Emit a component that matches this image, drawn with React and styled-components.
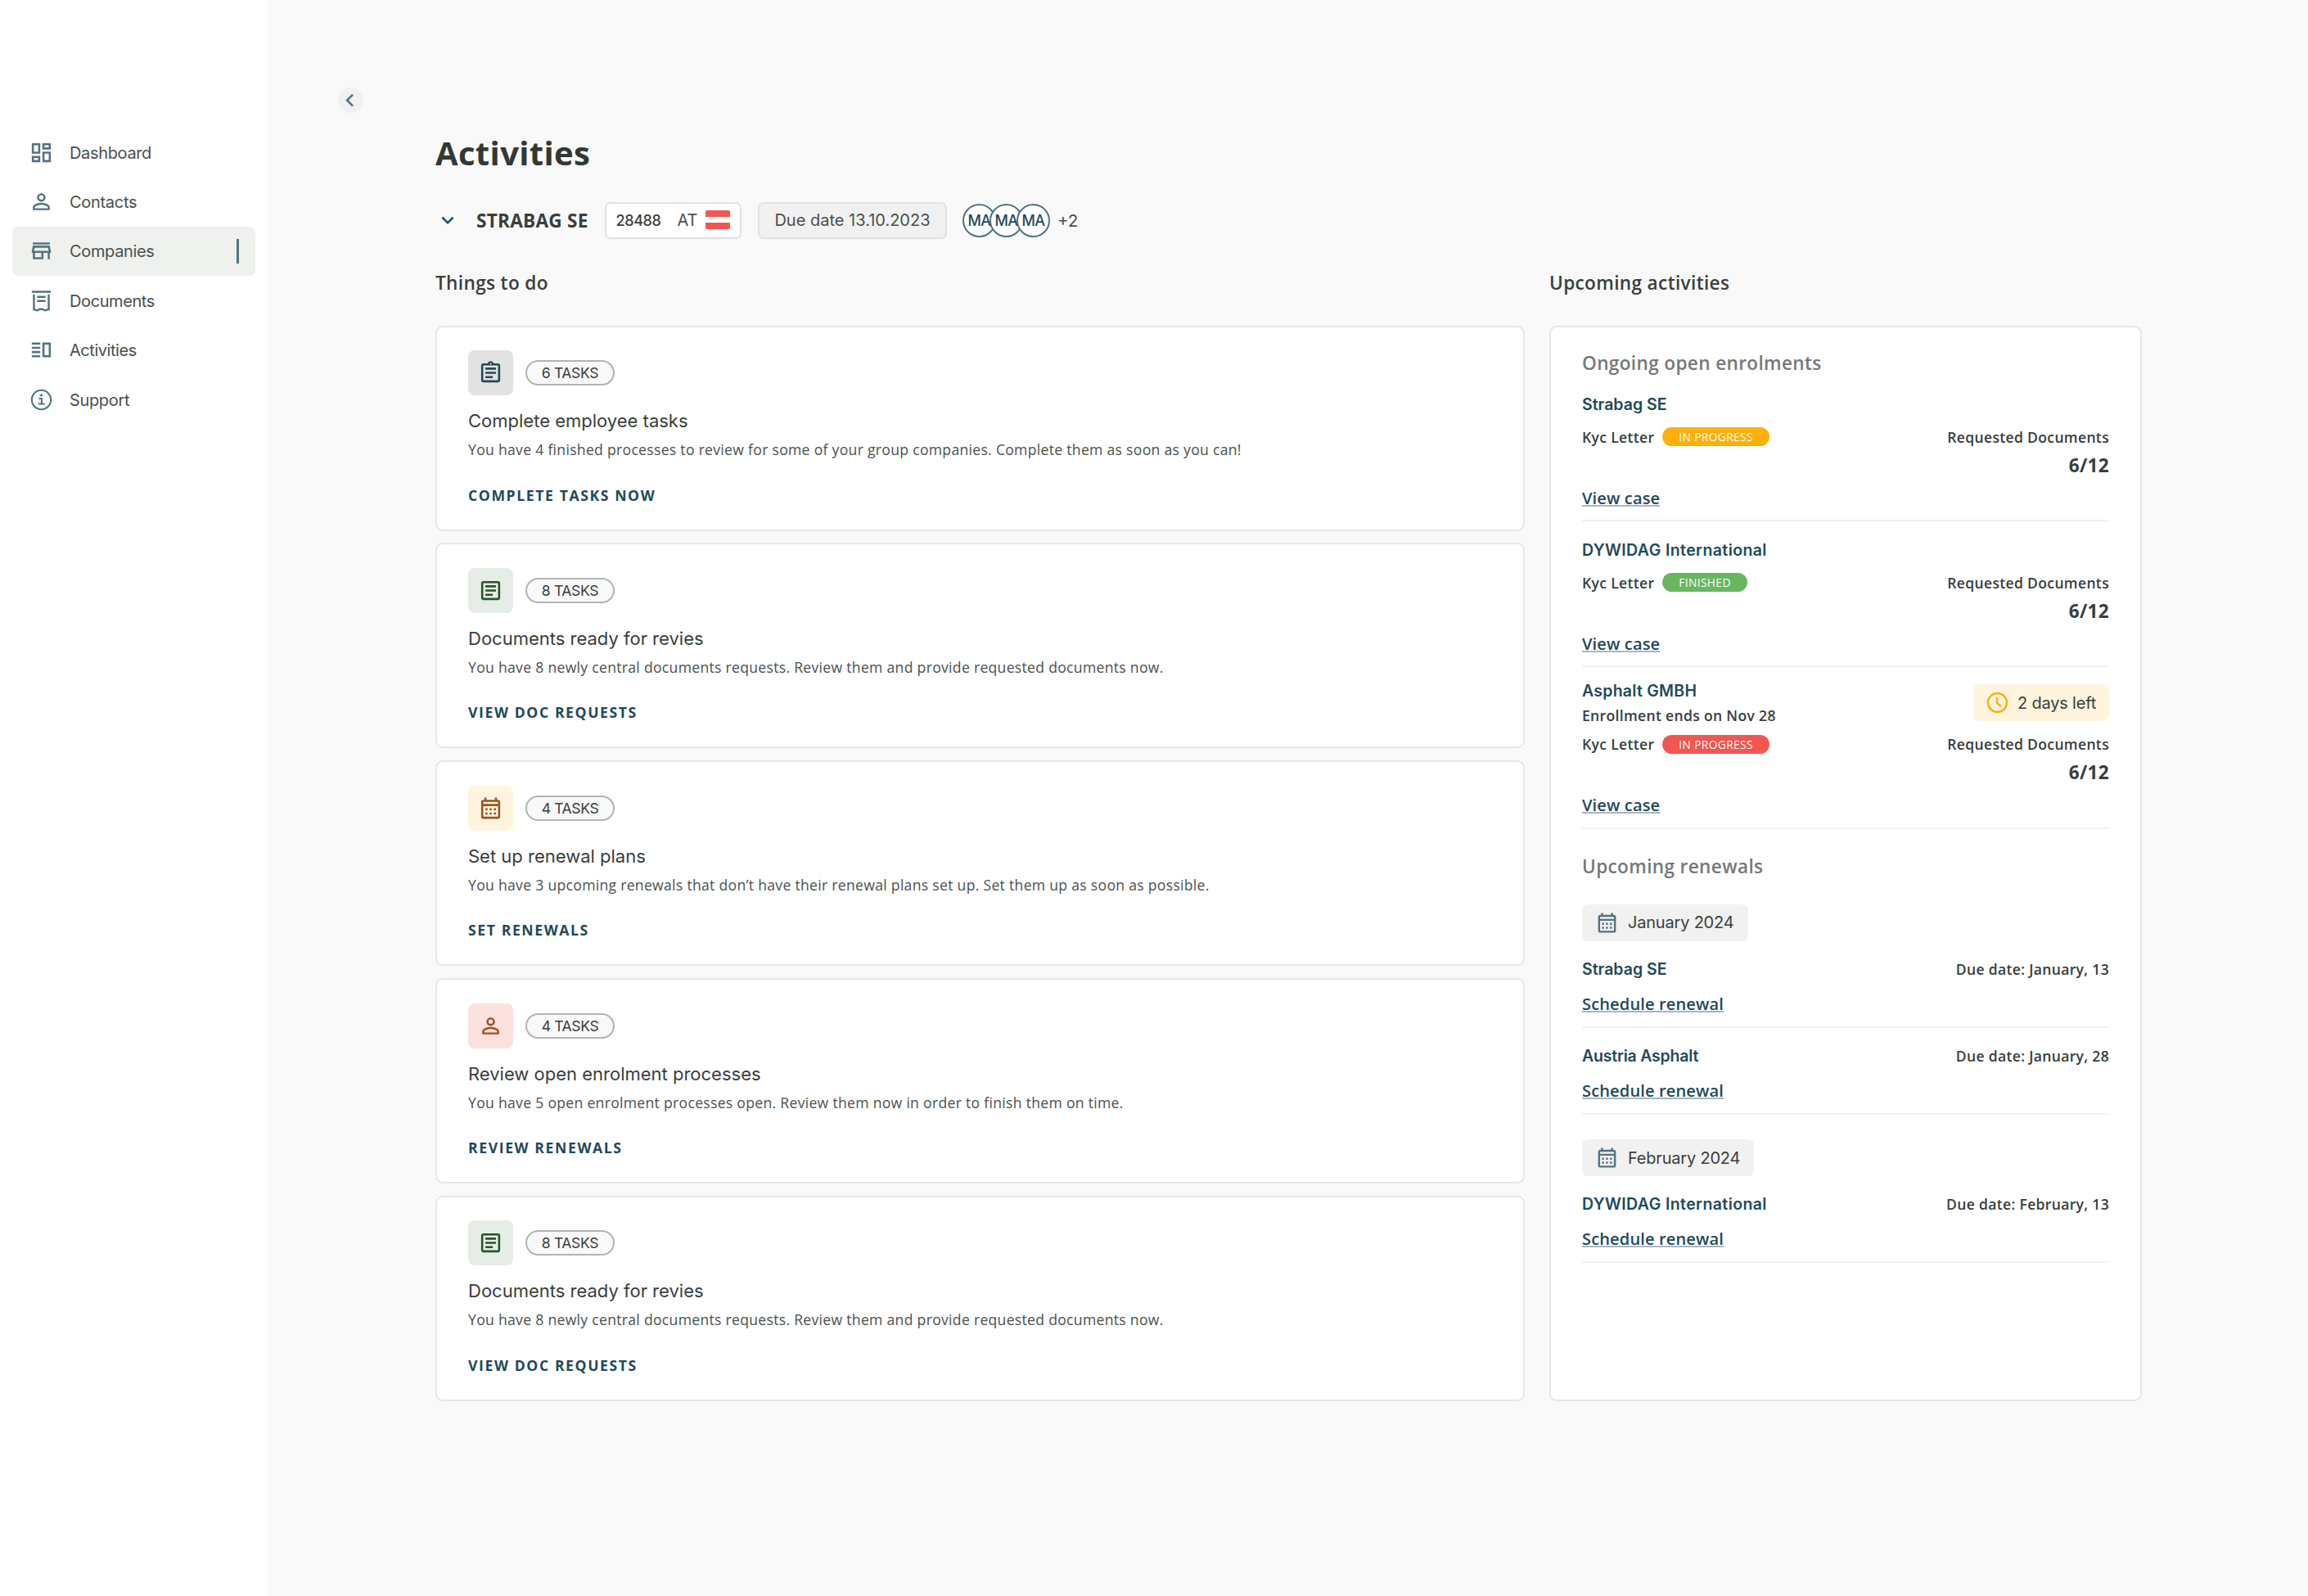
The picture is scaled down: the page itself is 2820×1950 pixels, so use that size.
import styled, { createGlobalStyle } from "styled-components"
import {
  MdOutlineDashboard,
  MdOutlineStore,
  MdOutlineVerticalSplit,
  MdOutlineAssignment,
  MdOutlineArticle,
  MdOutlineCalendarMonth,
  MdPersonOutline,
  MdChevronLeft,
  MdKeyboardArrowDown,
} from "react-icons/md"

const GlobalStyle = createGlobalStyle`
    * {
        box-sizing: border-box;
    }
    body {
        margin: 0;
        background-color: #f9f9f9;
        color: #3a3e3c;
        font-family: "Open Sans", "Noto Sans", sans-serif;
    }
    h1, h2, h3, h4, p {
        margin: 0;
    }
    svg {
        display: block;
        flex-shrink: 0;
    }
`
const sans = `"Inter", "Liberation Sans", sans-serif`

const Container = styled.div`
    display: flex;
    width: 2820px;
    height: 1950px;
    overflow: hidden;
`
const Sidebar = styled.nav`
    width: 327px;
    padding: 156px 15px 0;
    background-color: white;
    flex-shrink: 0;
`
const NavItem = styled.a`
    display: flex;
    align-items: center;
    height: 60.4px;
    padding: 0 20px 0 20px;
    border-radius: 7px;
    background-color: ${(props) => (props.$active ? "#eff1ef" : "transparent")};
    color: #54737f;
`
const NavLabel = styled.span`
    flex: 1;
    margin-left: 19px;
    padding-top: 1px;
    font-family: ${sans};
    font-size: 20px;
    letter-spacing: ${(props) => props.$spacing}px;
    color: #4a4f4d;
`
const ActiveBar = styled.span`
    width: 3px;
    height: 30px;
    background-color: #54737f;
`
const Main = styled.main`
    flex: 1;
    padding: 107px 0 0 86px;
`
const BackButton = styled.button`
    display: flex;
    align-items: center;
    justify-content: center;
    width: 31px;
    height: 31px;
    padding: 0 2px 0 0;
    border: none;
    border-radius: 50%;
    background-color: #f1f1f1;
    color: #54737f;
`
const Page = styled.div`
    width: 2085px;
    margin-left: 119px;
    padding-top: 21px;
`
const Title = styled.h1`
    font-size: 40px;
    line-height: 56px;
    letter-spacing: 0.35px;
    color: #333835;
`
const CompanyRow = styled.div`
    display: flex;
    align-items: center;
    height: 46px;
    margin-top: 31px;
    color: #1f4a59;
`
const CompanyName = styled.h2`
    width: 138px;
    margin: 0 19px 0 20px;
    font-size: 22.6px;
    font-weight: 700;
    letter-spacing: 0.25px;
    white-space: nowrap;
    color: #3a3e3c;
`
const Chip = styled.div`
    display: flex;
    align-items: center;
    justify-content: center;
    height: 45px;
    width: ${(props) => props.$width}px;
    margin-right: ${(props) => props.$gap}px;
    border: 2px solid #e0e2e1;
    border-radius: 7px;
    background-color: ${(props) => props.$bg};
    font-family: ${sans};
    font-size: 20px;
    white-space: nowrap;
    color: #4a4f4d;
`
const CompanyCode = styled.span`
    font-size: 18px;
    font-weight: 500;
    letter-spacing: -0.4px;
    margin-right: 20px;
    color: #3a3e3c;
`
const Flag = styled.span`
    width: 30px;
    height: 23px;
    margin: -2px 0 0 10px;
    border-top: 8px solid #f25650;
    border-bottom: 8px solid #f25650;
    border-radius: 2px;
    background-color: white;
`
const Avatar = styled.span`
    display: flex;
    align-items: center;
    justify-content: center;
    width: 41px;
    height: 41px;
    margin-right: -8px;
    border: 2px solid #54737f;
    border-radius: 50%;
    background-color: white;
    font-family: ${sans};
    font-size: 18px;
    font-weight: 500;
    letter-spacing: -0.5px;
    color: #1f4a59;
`
const More = styled.span`
    margin-left: 17px;
    font-family: ${sans};
    font-size: 20.5px;
    color: #4a4f4d;
`
const Columns = styled.div`
    display: grid;
    grid-template-columns: 1331px 724px;
    column-gap: 30px;
    margin-top: 36px;
`
const Column = styled.section`
    display: flex;
    flex-direction: column;
`
const ColumnTitle = styled.h3`
    height: 69.5px;
    padding-top: 1px;
    font-size: 22.6px;
    line-height: 33px;
    font-weight: 600;
    letter-spacing: 0.35px;
`
const Cards = styled.div`
    display: flex;
    flex-direction: column;
    gap: 14.8px;
`
const Card = styled.article`
    height: 251px;
    padding: 28.7px 38px;
    border: 2px solid #e5e6e6;
    border-radius: 9px;
    background-color: white;
`
const CardTop = styled.div`
    display: flex;
    align-items: center;
    gap: 15px;
`
const IconBox = styled.div`
    display: flex;
    align-items: center;
    justify-content: center;
    width: 55px;
    height: 55px;
    border-radius: 8px;
    background-color: ${(props) => props.$bg};
    color: ${(props) => props.$color};
`
const TaskCount = styled.span`
    display: flex;
    align-items: center;
    justify-content: center;
    width: 109px;
    height: 31px;
    border: 2px solid #b0b5b4;
    border-radius: 16px;
    background-color: #f9f9f9;
    font-family: ${sans};
    font-size: 17.6px;
    letter-spacing: -0.4px;
`
const CardTitle = styled.h4`
    margin-top: 13px;
    font-family: ${sans};
    font-size: 22px;
    line-height: 36px;
    font-weight: 400;
`
const CardText = styled.p`
    margin-top: 3px;
    font-size: 17.6px;
    line-height: 28px;
    letter-spacing: 0.29px;
    color: #4c514f;
`
const CardAction = styled.a`
    display: block;
    margin-top: 27.5px;
    font-size: 17.6px;
    line-height: 28px;
    font-weight: 700;
    letter-spacing: 1.6px;
    color: #1f4a59;
`
const Panel = styled.div`
    flex: 1;
    padding: 26px 38px;
    border: 2px solid #e5e6e6;
    border-radius: 9px;
    background-color: white;
`
const PanelTitle = styled.h4`
    margin-top: ${(props) => props.$top || 0}px;
    font-size: 22.6px;
    line-height: 36px;
    font-weight: 600;
    letter-spacing: 0.35px;
    color: #757978;
`
const Entry = styled.div`
    height: ${(props) => props.$height}px;
    padding-top: ${(props) => props.$top}px;
    border-bottom: 2px solid #f1f1f1;
`
const Row = styled.div`
    display: flex;
    justify-content: space-between;
    align-items: flex-start;
`
const EntryName = styled.h4`
    font-family: ${sans};
    font-size: 19.5px;
    line-height: 30px;
    font-weight: 600;
    letter-spacing: ${(props) => props.$spacing}px;
    color: #1f4a59;
`
const Small = styled.span`
    display: block;
    font-size: 17.6px;
    line-height: 30px;
    font-weight: 600;
    letter-spacing: 0.3px;
`
const Letter = styled.div`
    display: flex;
    align-items: center;
    gap: 10px;
    margin-top: ${(props) => props.$top}px;
`
const Status = styled.span`
    height: 23px;
    padding: 0 20px;
    border-radius: 12px;
    background-color: ${(props) => props.$bg};
    font-size: 13.8px;
    line-height: 23px;
    letter-spacing: 0.35px;
    color: white;
`
const Count = styled.div`
    margin-top: 4px;
    font-size: 22.6px;
    line-height: 32px;
    font-weight: 700;
    letter-spacing: 0.3px;
    text-align: right;
`
const Link = styled.a`
    display: table;
    height: 18px;
    margin-top: ${(props) => props.$top}px;
    border-bottom: 2px solid #a9b7bd;
    font-size: 20.1px;
    line-height: 16px;
    font-weight: 600;
    letter-spacing: 0.1px;
    color: #1f4a59;
`
const Tag = styled.div`
    display: flex;
    align-items: center;
    width: ${(props) => props.$width}px;
    height: 45px;
    margin-top: ${(props) => props.$top || 0}px;
    padding-left: 16px;
    border-radius: 7px;
    background-color: ${(props) => props.$bg};
    font-family: ${sans};
    font-size: 20px;
    letter-spacing: -0.2px;
    white-space: nowrap;
    gap: 11px;
`

const DocumentIcon = () => (
  <svg width="31" height="31" viewBox="0 0 24 24" fill="none" stroke="currentColor" strokeWidth="1.9">
    <path d="M3 3.500h18M5 6v14.200c1.200.1 1.800.8 3 .8s1.500-1 2.500-1c1 0 1.500 0 2.500 0 1 0 1.500 1 2.700 1s1.600-.8 3.300-.8V6M8 8.300h8M8 12.200h8" />
  </svg>
)

const InfoIcon = () => (
  <svg width="31" height="31" viewBox="0 0 30 30" fill="none" stroke="currentColor" strokeWidth="2">
    <circle cx="15" cy="15" r="11.300" />
    <path d="M12 13.500h3.400v6.200M11.300 19.900h7.600" />
    <circle cx="15" cy="9.600" r="1.500" fill="currentColor" stroke="none" />
  </svg>
)

const ClockIcon = () => (
  <svg width="27" height="27" viewBox="0 0 27 27" fill="none" stroke="#ffaf0a" strokeWidth="2.400">
    <circle cx="13.500" cy="13.500" r="11.500" />
    <path d="M13 7v7l5 4" />
  </svg>
)

const navItems = [
  { label: "Dashboard", icon: <MdOutlineDashboard size={31} />, spacing: -0.35 },
  { label: "Contacts", icon: <MdPersonOutline size={31} />, spacing: -0.3 },
  { label: "Companies", icon: <MdOutlineStore size={31} />, spacing: -0.35, active: true },
  { label: "Documents", icon: <DocumentIcon />, spacing: -0.4 },
  { label: "Activities", icon: <MdOutlineVerticalSplit size={31} />, spacing: -0.45 },
  { label: "Support", icon: <InfoIcon />, spacing: -0.35 },
]

const tasks = [
  {
    count: "6 TASKS",
    title: "Complete employee tasks",
    text: "You have 4 finished processes to review for some of your group companies. Complete them as soon as you can!",
    action: "COMPLETE TASKS NOW",
    icon: <MdOutlineAssignment size={31} />,
    bg: "#e0e3e2",
    color: "#1f4a59",
  },
  {
    count: "8 TASKS",
    title: "Documents ready for revies",
    text: "You have 8 newly central documents requests. Review them and provide requested documents now.",
    action: "VIEW DOC REQUESTS",
    icon: <MdOutlineArticle size={31} />,
    bg: "#e6ede6",
    color: "#24562a",
  },
  {
    count: "4 TASKS",
    title: "Set up renewal plans",
    text: "You have 3 upcoming renewals that don’t have their renewal plans set up. Set them up as soon as possible.",
    action: "SET RENEWALS",
    icon: <MdOutlineCalendarMonth size={31} />,
    bg: "#fff5df",
    color: "#a4501c",
  },
  {
    count: "4 TASKS",
    title: "Review open enrolment processes",
    text: "You have 5 open enrolment processes open. Review them now in order to finish them on time.",
    action: "REVIEW RENEWALS",
    icon: <MdPersonOutline size={31} />,
    bg: "#fde1df",
    color: "#a4501c",
  },
  {
    count: "8 TASKS",
    title: "Documents ready for revies",
    text: "You have 8 newly central documents requests. Review them and provide requested documents now.",
    action: "VIEW DOC REQUESTS",
    icon: <MdOutlineArticle size={31} />,
    bg: "#e6ede6",
    color: "#24562a",
  },
]

const Enrolment = ({ name, spacing, status, color, ends, height, top }) => (
  <Entry $height={height} $top={top}>
    <Row>
      <div>
        <EntryName $spacing={spacing}>{name}</EntryName>
        {ends && <Small>{ends}</Small>}
      </div>
      {ends && (
        <Tag $width={166} $bg="#fff5df" $top={7}>
          <ClockIcon />
          2 days left
        </Tag>
      )}
    </Row>
    <Row>
      <Letter $top={ends ? 5 : 10}>
        <Small>Kyc Letter</Small>
        <Status $bg={color}>{status}</Status>
      </Letter>
      <Letter $top={ends ? 5 : 10}>
        <Small>Requested Documents</Small>
      </Letter>
    </Row>
    <Count>6/12</Count>
    <Link $top={16}>View case</Link>
  </Entry>
)

const Renewal = ({ name, spacing, due, height, top }) => (
  <Entry $height={height} $top={top}>
    <Row>
      <EntryName $spacing={spacing}>{name}</EntryName>
      <Small>{due}</Small>
    </Row>
    <Link $top={20}>Schedule renewal</Link>
  </Entry>
)

const App = () => {
  return (
    <Container>
      <GlobalStyle />
      <Sidebar>
        {navItems.map((item) => (
          <NavItem key={item.label} $active={item.active}>
            {item.icon}
            <NavLabel $spacing={item.spacing}>{item.label}</NavLabel>
            {item.active && <ActiveBar />}
          </NavItem>
        ))}
      </Sidebar>
      <Main>
        <BackButton>
          <MdChevronLeft size={31} />
        </BackButton>
        <Page>
          <Title>Activities</Title>
          <CompanyRow>
            <MdKeyboardArrowDown size={30} />
            <CompanyName>STRABAG SE</CompanyName>
            <Chip $width={167} $bg="white" $gap={20}>
              <CompanyCode>28488</CompanyCode>
              AT
              <Flag />
            </Chip>
            <Chip $width={231} $bg="#f1f1f1" $gap={19}>Due date 13.10.2023</Chip>
            <Avatar>MA</Avatar>
            <Avatar>MA</Avatar>
            <Avatar>MA</Avatar>
            <More>+2</More>
          </CompanyRow>
          <Columns>
            <Column>
              <ColumnTitle>Things to do</ColumnTitle>
              <Cards>
                {tasks.map((task, i) => (
                  <Card key={i}>
                    <CardTop>
                      <IconBox $bg={task.bg} $color={task.color}>{task.icon}</IconBox>
                      <TaskCount>{task.count}</TaskCount>
                    </CardTop>
                    <CardTitle>{task.title}</CardTitle>
                    <CardText>{task.text}</CardText>
                    <CardAction>{task.action}</CardAction>
                  </Card>
                ))}
              </Cards>
            </Column>
            <Column>
              <ColumnTitle>Upcoming activities</ColumnTitle>
              <Panel>
                <PanelTitle>Ongoing open enrolments</PanelTitle>
                <Enrolment name="Strabag SE" spacing={0} status="IN PROGRESS" color="#ffaf0a" height={175.5} top={17} />
                <Enrolment name="DYWIDAG International" spacing={0.4} status="FINISHED" color="#68b65f" height={178} top={19.5} />
                <Enrolment
                  name="Asphalt GMBH"
                  spacing={0.25}
                  status="IN PROGRESS"
                  color="#f25650"
                  ends="Enrollment ends on Nov 28"
                  height={198}
                  top={14}
                />
                <PanelTitle $top={28}>Upcoming renewals</PanelTitle>
                <Tag $width={203} $bg="#f1f1f1" $top={27.5}>
                  <MdOutlineCalendarMonth size={29} color="#54737f" />
                  January 2024
                </Tag>
                <Renewal name="Strabag SE" spacing={0} due="Due date: January, 13" height={106.5} top={19.5} />
                <Renewal name="Austria Asphalt" spacing={-0.2} due="Due date: January, 28" height={106} top={18.5} />
                <Tag $width={210} $bg="#f1f1f1" $top={30}>
                  <MdOutlineCalendarMonth size={29} color="#54737f" />
                  February 2024
                </Tag>
                <Renewal name="DYWIDAG International" spacing={0.4} due="Due date: February, 13" height={106} top={19} />
              </Panel>
            </Column>
          </Columns>
        </Page>
      </Main>
    </Container>
  )
}

export default App
